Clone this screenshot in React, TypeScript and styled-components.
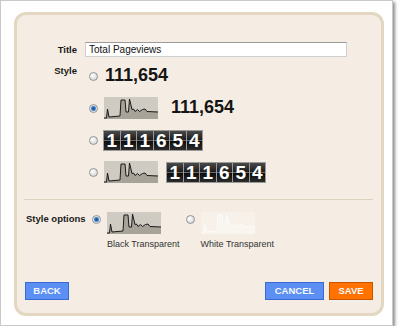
import styled, { createGlobalStyle } from "styled-components";

const GlobalStyle = createGlobalStyle`
  html, body {
    margin: 0;
    padding: 0;
    background: #ffffff;
  }
  body {
    font-family: "Liberation Sans", Arial, sans-serif;
  }
`;

const Frame = styled.div`
  width: 393px;
  height: 326px;
  box-sizing: border-box;
  border: 1px solid #c9c9c9;
  box-shadow: 2px 2px 3px rgba(0, 0, 0, 0.45);
  background: #ffffff;
  padding: 11px 0 0 13px;
`;

const Panel = styled.div`
  width: 370px;
  height: 304px;
  box-sizing: border-box;
  border: 3px solid #e4d7c2;
  border-radius: 12px;
  background: #f5ede3;
  display: flex;
  flex-direction: column;
`;

const FieldRow = styled.div<{ $top: number }>`
  display: grid;
  grid-template-columns: 60px 1fr;
  column-gap: 8px;
  align-items: start;
  margin-top: ${(p) => p.$top}px;
`;

const Label = styled.div`
  font-size: 9.5px;
  font-weight: bold;
  color: #1a1a1a;
  line-height: 12px;
  text-align: right;
`;

const TitleLabel = styled(Label)`
  line-height: 15px;
`;

const TitleInput = styled.input`
  width: 262px;
  height: 15px;
  box-sizing: border-box;
  border: 1px solid #cfcfcf;
  border-top-color: #9a9a9a;
  background: #ffffff;
  font-family: "Liberation Sans", Arial, sans-serif;
  font-size: 10px;
  color: #111;
  padding: 0 3px;
  margin: 0;
  outline: none;
`;

const Options = styled.div`
  display: flex;
  flex-direction: column;
  gap: 10px;
`;

const OptionRow = styled.div`
  display: flex;
  align-items: center;
  height: 22px;
  padding-left: 4px;
`;

const Radio = styled.span<{ $checked?: boolean }>`
  display: inline-block;
  flex: none;
  width: 9px;
  height: 9px;
  box-sizing: border-box;
  border-radius: 50%;
  border: 1px solid #939393;
  margin-right: 6px;
  background: ${(p) =>
    p.$checked
      ? "radial-gradient(circle, #174f93 0, #2f6fb8 1.6px, #8db5de 2.6px, #f2f2f2 3.2px, #cfcfcf 100%)"
      : "radial-gradient(circle at 35% 35%, #ffffff 0, #ececec 40%, #c9c9c9 100%)"};
`;

const BigCount = styled.span<{ $indent?: number }>`
  font-size: 18px;
  font-weight: bold;
  color: #151515;
  line-height: 22px;
  margin-left: ${(p) => p.$indent ?? 0}px;
  margin-top: -2px;
`;

const Odometer = styled.div<{ $indent?: number }>`
  display: flex;
  gap: 1px;
  padding: 1px;
  background: #9a9a9a;
  margin-left: ${(p) => p.$indent ?? 0}px;
`;

const Digit = styled.span`
  width: 15.5px;
  height: 19px;
  display: flex;
  align-items: center;
  justify-content: center;
  background: linear-gradient(
    #4a4a4a 0%,
    #1c1c1c 47%,
    #6a6a6a 50%,
    #0c0c0c 53%,
    #2c2c2c 100%
  );
  color: #ffffff;
  font-size: 19px;
  font-weight: bold;
  line-height: 19px;
`;

const Separator = styled.div`
  height: 1px;
  background: #ddd0bd;
  margin: 16px 8px 0 7px;
`;

const ThemeRow = styled.div`
  display: flex;
  align-items: flex-start;
  margin-top: 12px;
  padding-left: 9px;
`;

const ThemeLabel = styled(Label)`
  width: 66px;
  text-align: left;
  margin-top: 1px;
  white-space: nowrap;
`;

const ThemeOption = styled.div`
  display: flex;
  align-items: flex-start;
  margin-right: 6px;

  & > ${Radio} {
    margin-top: 3px;
  }
`;

const ThemeBody = styled.div`
  display: flex;
  flex-direction: column;
`;

const Caption = styled.div`
  font-size: 9px;
  color: #333;
  line-height: 12px;
  margin-top: 4px;
  white-space: nowrap;
`;

const ButtonBar = styled.div`
  margin-top: auto;
  margin-bottom: 13px;
  padding: 0 8px;
  display: flex;
  justify-content: space-between;
`;

const ButtonGroup = styled.div`
  display: flex;
  gap: 5px;
`;

const Button = styled.button<{ $width: number; $tone: "blue" | "orange" }>`
  width: ${(p) => p.$width}px;
  height: 18px;
  box-sizing: border-box;
  padding: 0;
  border: 1px solid ${(p) => (p.$tone === "blue" ? "#3a69d2" : "#c75800")};
  background: ${(p) => (p.$tone === "blue" ? "#5b8ff4" : "#ff7200")};
  color: #f4f8ff;
  font-family: "Liberation Sans", Arial, sans-serif;
  font-size: 9.5px;
  font-weight: bold;
  line-height: 16px;
  cursor: pointer;
`;

const LINE =
  "0,21 2.5,21 3.5,12 5,20 16,19 17,3 21,3 22,15 24.5,15 25.5,2 28,12.5 29.5,12 31,14.5 33.5,12.5 35.5,14.5 38.5,12.5 41,12 43,14.5 54,15";

const Sparkline = ({ light }: { light?: boolean }) => (
  <svg width="54" height="22" viewBox="0 0 54 22" style={{ display: "block" }}>
    <rect width="54" height="22" fill={light ? "#f7f1e9" : "#cfcbc3"} />
    <polygon points={`${LINE} 54,22 0,22`} fill={light ? "#f9f5ef" : "#a8a398"} />
    <polyline
      points={LINE}
      fill="none"
      stroke={light ? "#fdfcfa" : "#1a1a1a"}
      strokeWidth="1"
    />
  </svg>
);

const COUNT = "111,654";
const DIGITS = ["1", "1", "1", "6", "5", "4"];

const Counter = ({ indent }: { indent?: number }) => (
  <Odometer $indent={indent}>
    {DIGITS.map((d, i) => (
      <Digit key={i}>{d}</Digit>
    ))}
  </Odometer>
);

export default function App() {
  return (
    <>
      <GlobalStyle />
      <Frame>
        <Panel>
          <FieldRow $top={27}>
            <TitleLabel>Title</TitleLabel>
            <TitleInput defaultValue="Total Pageviews" />
          </FieldRow>

          <FieldRow $top={8}>
            <Label>Style</Label>
            <Options>
              <OptionRow>
                <Radio />
                <BigCount $indent={1}>{COUNT}</BigCount>
              </OptionRow>
              <OptionRow>
                <Radio $checked />
                <Sparkline />
                <BigCount $indent={13}>{COUNT}</BigCount>
              </OptionRow>
              <OptionRow>
                <Radio />
                <Counter indent={-1} />
              </OptionRow>
              <OptionRow>
                <Radio />
                <Sparkline />
                <Counter indent={8} />
              </OptionRow>
            </Options>
          </FieldRow>

          <Separator />

          <ThemeRow>
            <ThemeLabel>Style options</ThemeLabel>
            <ThemeOption>
              <Radio $checked />
              <ThemeBody>
                <Sparkline />
                <Caption>Black Transparent</Caption>
              </ThemeBody>
            </ThemeOption>
            <ThemeOption>
              <Radio />
              <ThemeBody>
                <Sparkline light />
                <Caption>White Transparent</Caption>
              </ThemeBody>
            </ThemeOption>
          </ThemeRow>

          <ButtonBar>
            <Button $width={44} $tone="blue">BACK</Button>
            <ButtonGroup>
              <Button $width={59} $tone="blue">CANCEL</Button>
              <Button $width={44} $tone="orange">SAVE</Button>
            </ButtonGroup>
          </ButtonBar>
        </Panel>
      </Frame>
    </>
  );
}
